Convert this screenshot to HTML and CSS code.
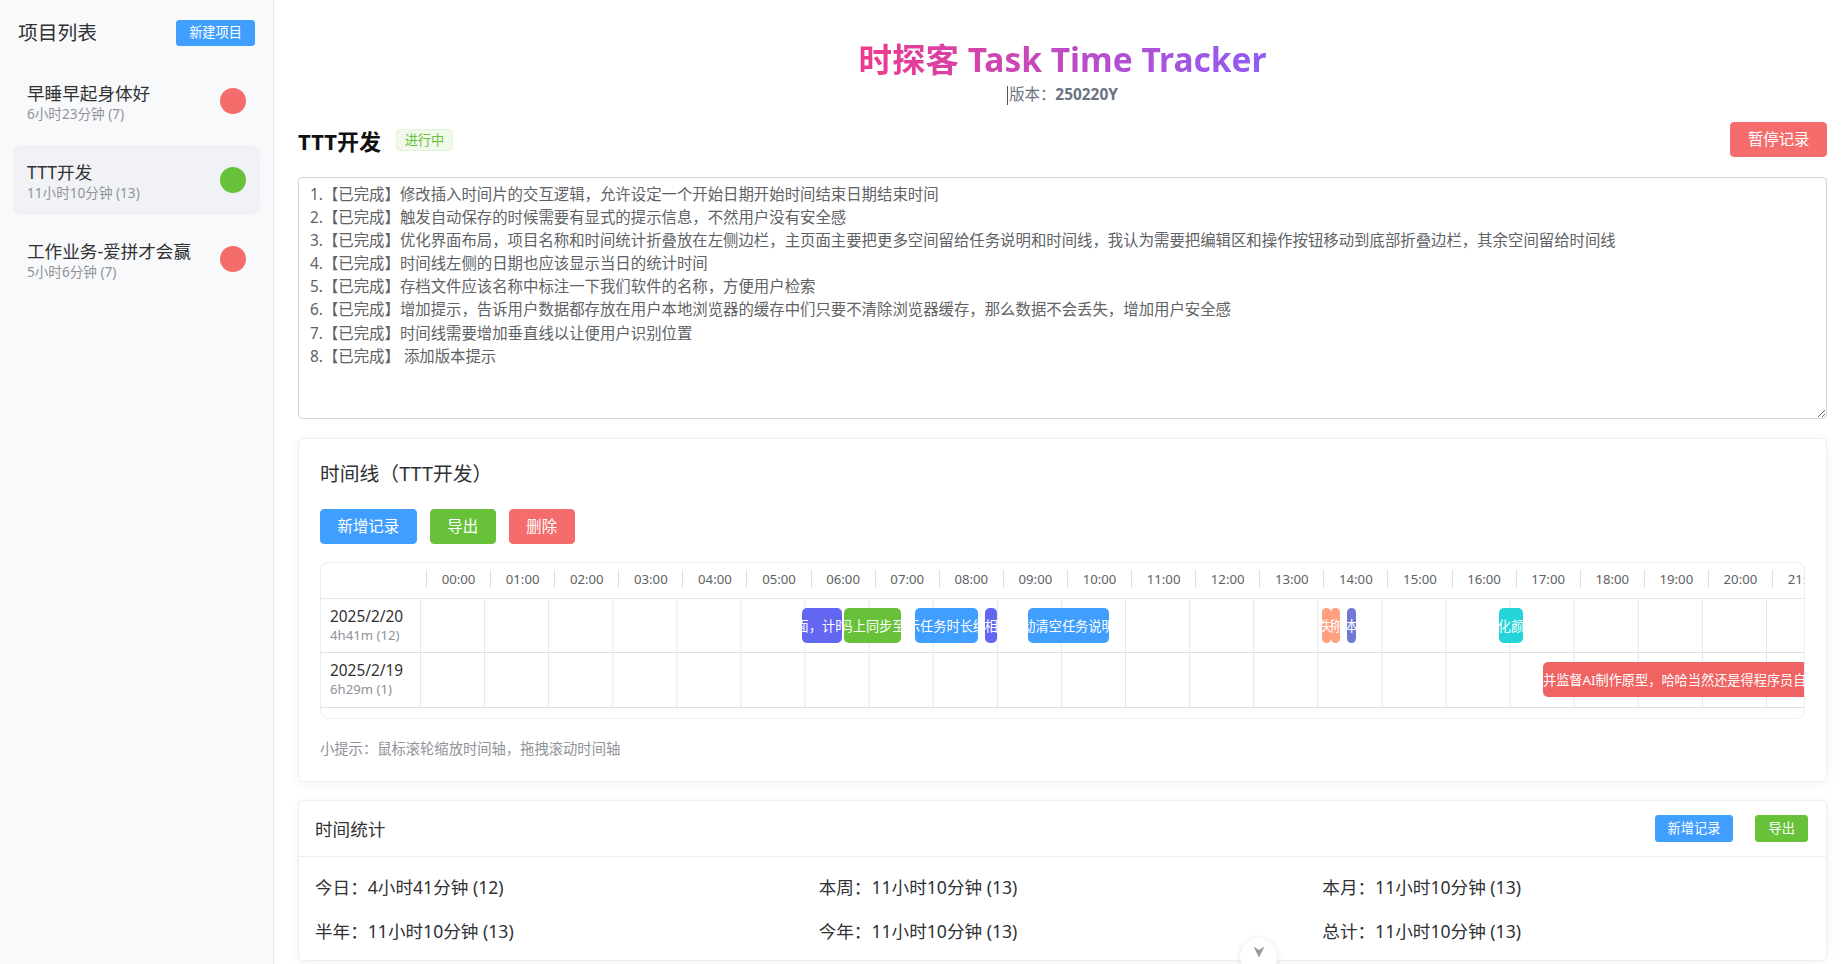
FILE: index.html
```html
<!DOCTYPE html>
<html lang="zh-CN">
<head>
<meta charset="utf-8">
<title>时探客 Task Time Tracker</title>
<link rel="stylesheet" href="styles.css">
</head>
<body>
<div class="app">
  <aside class="sidebar">
    <div class="side-head">
      <span class="side-title">项目列表</span>
      <button class="btn btn-primary btn-small">新建项目</button>
    </div>
    <div class="proj">
      <div class="proj-info">
        <div class="proj-title">早睡早起身体好</div>
        <div class="proj-sub">6小时23分钟 (7)</div>
      </div>
      <span class="dot dot-red"></span>
    </div>
    <div class="proj active">
      <div class="proj-info">
        <div class="proj-title">TTT开发</div>
        <div class="proj-sub">11小时10分钟 (13)</div>
      </div>
      <span class="dot dot-green"></span>
    </div>
    <div class="proj">
      <div class="proj-info">
        <div class="proj-title">工作业务-爱拼才会赢</div>
        <div class="proj-sub">5小时6分钟 (7)</div>
      </div>
      <span class="dot dot-red"></span>
    </div>
  </aside>

  <main class="main">
    <header class="hero">
      <h1 class="title"><span class="grad">时探客 Task Time Tracker</span></h1>
      <div class="version"><span class="caret"></span>版本：<b>250220Y</b></div>
    </header>

    <div class="proj-head">
      <div class="proj-name">
        <h2>TTT开发</h2>
        <span class="tag">进行中</span>
      </div>
      <button class="btn btn-danger">暂停记录</button>
    </div>

    <textarea class="notes" spellcheck="false">1.【已完成】修改插入时间片的交互逻辑，允许设定一个开始日期开始时间结束日期结束时间
2.【已完成】触发自动保存的时候需要有显式的提示信息，不然用户没有安全感
3.【已完成】优化界面布局，项目名称和时间统计折叠放在左侧边栏，主页面主要把更多空间留给任务说明和时间线，我认为需要把编辑区和操作按钮移动到底部折叠边栏，其余空间留给时间线
4.【已完成】时间线左侧的日期也应该显示当日的统计时间
5.【已完成】存档文件应该名称中标注一下我们软件的名称，方便用户检索
6.【已完成】增加提示，告诉用户数据都存放在用户本地浏览器的缓存中们只要不清除浏览器缓存，那么数据不会丢失，增加用户安全感
7.【已完成】时间线需要增加垂直线以让便用户识别位置
8.【已完成】 添加版本提示</textarea>

    <section class="card tl-card">
      <h3 class="tl-title">时间线（TTT开发）</h3>
      <div class="btn-row">
        <button class="btn btn-primary">新增记录</button>
        <button class="btn btn-success">导出</button>
        <button class="btn btn-danger">删除</button>
      </div>
      <div class="timeline">
        <div class="tl-head">
          <div class="tl-spacer"></div>
          <div class="hour">00:00</div><div class="hour">01:00</div><div class="hour">02:00</div><div class="hour">03:00</div>
          <div class="hour">04:00</div><div class="hour">05:00</div><div class="hour">06:00</div><div class="hour">07:00</div>
          <div class="hour">08:00</div><div class="hour">09:00</div><div class="hour">10:00</div><div class="hour">11:00</div>
          <div class="hour">12:00</div><div class="hour">13:00</div><div class="hour">14:00</div><div class="hour">15:00</div>
          <div class="hour">16:00</div><div class="hour">17:00</div><div class="hour">18:00</div><div class="hour">19:00</div>
          <div class="hour">20:00</div><div class="hour">21:00</div><div class="hour">22:00</div><div class="hour">23:00</div>
        </div>
        <div class="tl-row">
          <div class="tl-date">
            <div class="d-main">2025/2/20</div>
            <div class="d-sub">4h41m (12)</div>
          </div>
          <div class="tl-track">
            <div class="block c-indigo" style="left:382px;width:40px">刷新页面，计时不中断</div>
            <div class="block c-green" style="left:424px;width:57px">编辑码上同步至统计</div>
            <div class="block c-blue" style="left:495px;width:63px">显示任务时长统计</div>
            <div class="block c-indigo" style="left:565px;width:12px">相</div>
            <div class="block c-blue" style="left:608px;width:81px">自动清空任务说明框</div>
            <div class="block c-salmon" style="left:902px;width:9px">失</div>
            <div class="block c-salmon" style="left:911px;width:9px">称</div>
            <div class="block c-slate" style="left:927px;width:9px">本</div>
            <div class="block c-teal" style="left:1079px;width:24px">优化颜色</div>
          </div>
        </div>
        <div class="tl-row tl-row-2">
          <div class="tl-date">
            <div class="d-main">2025/2/19</div>
            <div class="d-sub">6h29m (1)</div>
          </div>
          <div class="tl-track">
            <div class="block c-red block-left" style="left:1123px;width:415px">并监督AI制作原型，哈哈当然还是得程序员自己动手写代码</div>
          </div>
        </div>
      </div>
      <p class="hint">小提示：鼠标滚轮缩放时间轴，拖拽滚动时间轴</p>
    </section>

    <section class="card stats-card">
      <div class="stats-head">
        <span class="stats-title">时间统计</span>
        <div class="stats-actions">
          <button class="btn btn-primary btn-small">新增记录</button>
          <button class="btn btn-success btn-small">导出</button>
        </div>
      </div>
      <div class="stats-body">
        <div>今日：4小时41分钟 (12)</div>
        <div>本周：11小时10分钟 (13)</div>
        <div>本月：11小时10分钟 (13)</div>
        <div>半年：11小时10分钟 (13)</div>
        <div>今年：11小时10分钟 (13)</div>
        <div>总计：11小时10分钟 (13)</div>
      </div>
    </section>
  </main>

  <div class="scroll-btn">
    <svg width="12" height="12" viewBox="0 0 12 12"><polygon points="0.5,0.5 6,4 11.5,0.5 6,11.5" fill="#9a9a9a"/></svg>
  </div>
</div>
</body>
</html>
```

FILE: styles.css
```css
html, body {
  margin: 0;
  padding: 0;
  height: 100%;
  overflow: hidden;
  background: #fff;
}

body {
  font-family: "Noto Sans", "Noto Sans CJK SC", sans-serif;
  color: #303133;
}

button, textarea {
  font-family: "Noto Sans", "Noto Sans CJK SC", sans-serif;
}

.app {
  display: flex;
  height: 100vh;
}

/* ---------- sidebar ---------- */
.sidebar {
  width: 274px;
  flex: none;
  box-sizing: border-box;
  background: #f8f9fb;
  border-right: 1px solid #e6e8eb;
  padding: 20px 13px;
}

.side-head {
  display: flex;
  align-items: center;
  justify-content: space-between;
  height: 26px;
  padding: 0 5px;
  margin-bottom: 20px;
}

.side-title {
  font-size: 19.8px;
  line-height: 24px;
  color: #303133;
}

.proj {
  height: 70px;
  box-sizing: border-box;
  display: flex;
  align-items: center;
  justify-content: space-between;
  padding: 0 14px;
  border-radius: 8px;
  margin-bottom: 9px;
}

.proj.active {
  background: #f0f2f5;
}

.proj-info {
  padding-top: 4px;
}

.proj-title {
  font-size: 17.6px;
  line-height: 22px;
  color: #303133;
}

.proj-sub {
  font-size: 13.6px;
  line-height: 20px;
  color: #909399;
}

.dot {
  width: 26.4px;
  height: 26.4px;
  border-radius: 50%;
  flex: none;
}

.dot-red { background: #f56c6c; }
.dot-green { background: #67c23a; }

/* ---------- buttons ---------- */
.btn {
  height: 35px;
  padding: 0 16.5px;
  font-size: 15.4px;
  border-radius: 4px;
  border: 1px solid transparent;
  color: #fff;
  cursor: pointer;
  line-height: 1;
}

.btn-small {
  height: 26.4px;
  padding: 0 12.1px;
  font-size: 13.2px;
  border-radius: 3px;
}

.btn-primary { background: #409eff; border-color: #409eff; }
.btn-success { background: #67c23a; border-color: #67c23a; }
.btn-danger { background: #f56c6c; border-color: #f56c6c; }

/* ---------- main ---------- */
.main {
  flex: 1;
  min-width: 0;
  box-sizing: border-box;
  padding: 37px 19px 0 24px;
}

.hero {
  text-align: center;
}

.title {
  margin: 0;
  font-size: 33.5px;
  line-height: 45px;
  font-weight: 700;
}

.grad {
  background: linear-gradient(90deg, #ee3a8c, #8f5cf7);
  -webkit-background-clip: text;
  background-clip: text;
  color: transparent;
}

.version {
  margin-top: 2px;
  font-size: 15.4px;
  line-height: 22px;
  color: #6b7280;
}

.version b {
  font-weight: 700;
}

.caret {
  display: inline-block;
  width: 1px;
  height: 19px;
  background: #4b5563;
  vertical-align: middle;
  margin-right: 1px;
}

.proj-head {
  display: flex;
  align-items: center;
  justify-content: space-between;
  height: 35px;
  margin-top: 16px;
}

.proj-name {
  display: flex;
  align-items: center;
}

.proj-name h2 {
  margin: 0;
  font-size: 22px;
  font-weight: 700;
  color: #111;
}

.tag {
  margin-left: 15px;
  height: 22px;
  box-sizing: border-box;
  padding: 0 7.7px;
  font-size: 13.2px;
  line-height: 20px;
  color: #67c23a;
  background: #f0f9eb;
  border: 1px solid #e1f3d8;
  border-radius: 4px;
}

.notes {
  display: block;
  width: 100%;
  height: 242px;
  box-sizing: border-box;
  margin: 20px 0 0;
  padding: 5px 11px;
  font-size: 15.4px;
  line-height: 23.1px;
  color: #606266;
  border: 1px solid #d0d4dc;
  border-radius: 4px;
  resize: vertical;
  outline: none;
  background: #fff;
}

/* ---------- cards ---------- */
.card {
  background: #fff;
  border: 1px solid #ebeef5;
  border-radius: 5px;
  box-shadow: 0 2px 12px rgba(0, 0, 0, 0.05);
}

.tl-card {
  margin-top: 19px;
  padding: 22px 21px;
}

.tl-title {
  margin: 0;
  font-size: 19.8px;
  line-height: 26px;
  font-weight: 400;
  color: #303133;
}

.btn-row {
  display: flex;
  gap: 13.2px;
  margin-top: 22px;
}

.timeline {
  margin-top: 18px;
  height: 157px;
  box-sizing: border-box;
  border: 1px solid #ebeef5;
  border-radius: 8px;
  overflow: hidden;
}

.tl-head {
  display: flex;
  align-items: center;
  height: 36px;
  box-sizing: border-box;
  padding-bottom: 4px;
  border-bottom: 1px solid #e4e7ed;
}

.tl-spacer {
  width: 105px;
  flex: none;
}

.hour {
  width: 64.1px;
  flex: none;
  box-sizing: border-box;
  border-left: 1px solid #dcdfe6;
  height: 18px;
  line-height: 18px;
  text-align: center;
  font-size: 13.2px;
  color: #606266;
}

.tl-row {
  display: flex;
  height: 54px;
  box-sizing: border-box;
  border-bottom: 1px solid #dcdfe6;
}

.tl-row-2 {
  height: 55px;
}

.tl-date {
  width: 99px;
  flex: none;
  box-sizing: border-box;
  padding-left: 9px;
  display: flex;
  flex-direction: column;
  justify-content: center;
}

.d-main {
  font-size: 15.4px;
  line-height: 19px;
  color: #303133;
}

.d-sub {
  font-size: 13.2px;
  line-height: 19px;
  color: #909399;
}

.tl-track {
  position: relative;
  width: 1538.4px;
  flex: none;
  background-image: linear-gradient(to right, #e4e7ed 1px, transparent 1px);
  background-size: 64.1px 100%;
}

.block {
  position: absolute;
  top: 9px;
  height: 35px;
  border-radius: 5px;
  color: #fff;
  font-size: 13.2px;
  display: flex;
  align-items: center;
  justify-content: center;
  overflow: hidden;
  white-space: nowrap;
}

.block-left {
  justify-content: flex-start;
}

.c-indigo { background: #6366f1; }
.c-green { background: #67c23a; }
.c-blue { background: #409eff; }
.c-salmon { background: #ff9f7f; }
.c-slate { background: #7179d6; }
.c-teal { background: #23d4d8; }
.c-red { background: #ef6363; }

.hint {
  margin: 20px 0 0;
  font-size: 14.3px;
  line-height: 20px;
  color: #909399;
}

/* ---------- stats ---------- */
.stats-card {
  margin-top: 18px;
}

.stats-head {
  height: 56px;
  box-sizing: border-box;
  display: flex;
  align-items: center;
  justify-content: space-between;
  padding: 0 18px 0 16px;
  border-bottom: 1px solid #ebeef5;
}

.stats-title {
  font-size: 17.6px;
  color: #303133;
}

.stats-actions {
  display: flex;
  gap: 22px;
}

.stats-body {
  display: grid;
  grid-template-columns: repeat(3, 1fr);
  row-gap: 18px;
  padding: 17px 0 16px 16px;
  font-size: 17.6px;
  line-height: 26px;
  color: #303133;
}

.scroll-btn {
  position: fixed;
  left: 1240px;
  top: 938px;
  width: 37px;
  height: 37px;
  border-radius: 50%;
  background: #fff;
  box-shadow: 0 1px 6px rgba(0, 0, 0, 0.12);
  display: flex;
  justify-content: center;
  align-items: flex-start;
  padding-top: 8px;
  box-sizing: border-box;
}
```
